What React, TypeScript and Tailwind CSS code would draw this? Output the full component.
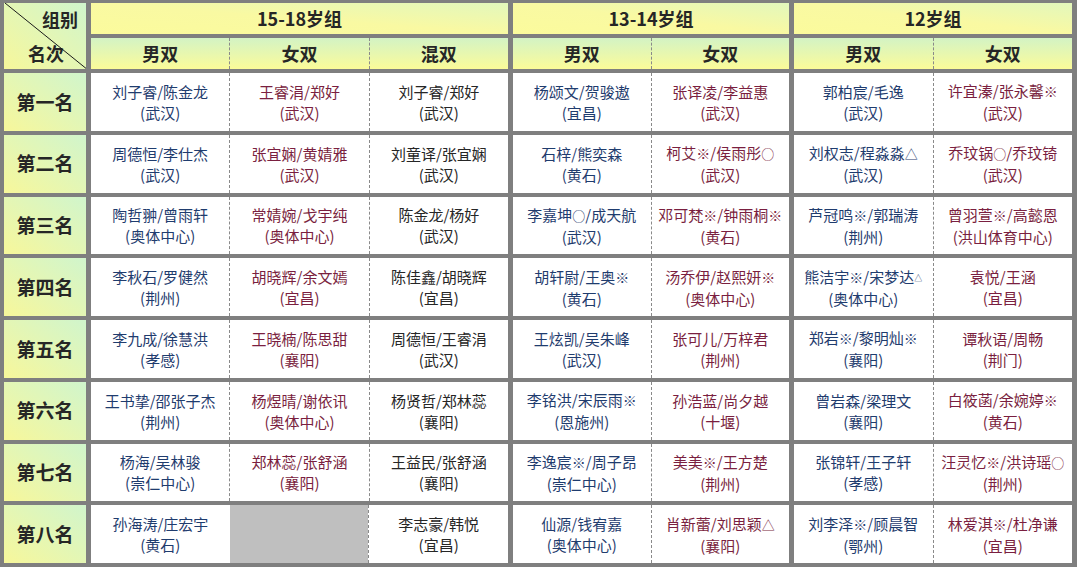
import React from "react";

type Cell = { name: string; place: string; sup?: string } | null;

// column colours: 男双 navy, 女双 maroon, 混双 near black
const COLORS = [
  "text-[#1f3c6e]",
  "text-[#7a1f40]",
  "text-[#262626]",
  "text-[#1f3c6e]",
  "text-[#7a1f40]",
  "text-[#1f3c6e]",
  "text-[#7a1f40]",
];

const GROUPS = [
  { label: "15-18岁组", subs: ["男双", "女双", "混双"] },
  { label: "13-14岁组", subs: ["男双", "女双"] },
  { label: "12岁组", subs: ["男双", "女双"] },
];

const RANKS = ["第一名", "第二名", "第三名", "第四名", "第五名", "第六名", "第七名", "第八名"];

const c = (name: string, place: string, sup?: string): Cell => ({ name, place, sup });

const ROWS: Cell[][] = [
  [
    c("刘子睿/陈金龙", "武汉"),
    c("王睿涓/郑好", "武汉"),
    c("刘子睿/郑好", "武汉"),
    c("杨颂文/贺骏遨", "宜昌"),
    c("张译凌/李益惠", "武汉"),
    c("郭柏宸/毛逸", "武汉"),
    c("许宜溱/张永馨※", "武汉"),
  ],
  [
    c("周德恒/李仕杰", "武汉"),
    c("张宜娴/黄婧雅", "武汉"),
    c("刘童译/张宜娴", "武汉"),
    c("石梓/熊奕森", "黄石"),
    c("柯艾※/侯雨彤○", "武汉"),
    c("刘权志/程淼淼△", "武汉"),
    c("乔玟锅○/乔玟锜", "武汉"),
  ],
  [
    c("陶哲翀/曾雨轩", "奥体中心"),
    c("常婧婉/戈宇纯", "奥体中心"),
    c("陈金龙/杨好", "武汉"),
    c("李嘉坤○/成天航", "武汉"),
    c("邓可梵※/钟雨桐※", "黄石"),
    c("芦冠鸣※/郭瑞涛", "荆州"),
    c("曾羽萱※/高懿恩", "洪山体育中心"),
  ],
  [
    c("李秋石/罗健然", "荆州"),
    c("胡晓辉/余文嫣", "宜昌"),
    c("陈佳鑫/胡晓辉", "宜昌"),
    c("胡轩尉/王奥※", "黄石"),
    c("汤乔伊/赵熙妍※", "奥体中心"),
    c("熊洁宇※/宋梦达", "奥体中心", "△"),
    c("袁悦/王涵", "宜昌"),
  ],
  [
    c("李九成/徐慧洪", "孝感"),
    c("王晓楠/陈思甜", "襄阳"),
    c("周德恒/王睿涓", "武汉"),
    c("王炫凯/吴朱峰", "武汉"),
    c("张可儿/万梓君", "荆州"),
    c("郑岩※/黎明灿※", "襄阳"),
    c("谭秋语/周畅", "荆门"),
  ],
  [
    c("王书挚/邵张子杰", "荆州"),
    c("杨煜晴/谢依讯", "奥体中心"),
    c("杨贤哲/郑林蕊", "襄阳"),
    c("李铭洪/宋辰雨※", "恩施州"),
    c("孙浩蓝/尚夕越", "十堰"),
    c("曾岩森/梁理文", "襄阳"),
    c("白筱菡/余婉婷※", "黄石"),
  ],
  [
    c("杨海/吴林骏", "崇仁中心"),
    c("郑林蕊/张舒涵", "襄阳"),
    c("王益民/张舒涵", "襄阳"),
    c("李逸宸※/周子昂", "崇仁中心"),
    c("美美※/王方楚", "荆州"),
    c("张锦轩/王子轩", "孝感"),
    c("汪灵忆※/洪诗瑶○", "荆州"),
  ],
  [
    c("孙海涛/庄宏宇", "黄石"),
    null,
    c("李志豪/韩悦", "宜昌"),
    c("仙源/钱宥嘉", "奥体中心"),
    c("肖新蕾/刘思颖△", "襄阳"),
    c("刘李泽※/顾晨智", "鄂州"),
    c("林爱淇※/杜净谦", "宜昌"),
  ],
];

const DASH = "border-l border-dashed border-[#8a8a8a]";

// the marks ※ ○ △ sit a bit smaller than the names in the sheet
function Name({ text }: { text: string }) {
  return (
    <>
      {text.split(/([※○△])/).map((part, i) =>
        part === "※" ? (
          <span key={i} className="text-[14px]">
            {part}
          </span>
        ) : part === "○" || part === "△" ? (
          <span key={i} className="text-[13px]">
            {part}
          </span>
        ) : (
          part
        )
      )}
    </>
  );
}

function PairCell({ cell, col, first }: { cell: Cell; col: number; first: boolean }) {
  if (!cell) {
    return <div className="flex-1 bg-[#bfbfbf]" />;
  }
  return (
    <div
      className={`flex-1 flex flex-col items-center justify-center text-[15px] leading-[21px] whitespace-nowrap ${COLORS[col]} ${
        first ? "" : DASH
      }`}
    >
      <span>
        <Name text={cell.name} />
        {cell.sup && <span className="text-[8px] align-top relative top-[1px]">{cell.sup}</span>}
      </span>
      <span>({cell.place})</span>
    </div>
  );
}

export default function App() {
  const offsets = [0, 3, 5];

  return (
    <div className="w-[1080px] h-[567px] bg-white font-['Noto_Sans_CJK_SC',sans-serif]">
      <div className="w-[1077px] h-[567px] bg-[#7f7f7f] pt-[3px] pl-[4px] pr-[5px] pb-[4px] grid grid-cols-[82px_417px_276px_278px] grid-rows-[31px_31px_repeat(8,57.75px)] gap-x-[5px] gap-y-[4px]">
        {/* corner cell */}
        <div className="row-span-2 relative flex flex-col justify-between bg-linear-to-tr from-[#f7f79a] to-[#d0f5cc] text-[18px] font-bold text-[#262626] leading-none">
          <svg className="absolute inset-0" width="82" height="66" viewBox="0 0 82 66">
            <line x1="1" y1="0" x2="84" y2="67" stroke="#1a1a1a" strokeWidth="1" />
          </svg>
          <span className="self-end pr-[8px] pt-[7px]">组别</span>
          <span className="self-start pl-[24px] pb-[7px]">名次</span>
        </div>

        {/* group headers */}
        {GROUPS.map((g) => (
          <div
            key={g.label}
            className="flex items-center justify-center bg-linear-to-tr from-[#fbfb9c] via-[#f9f9a2] to-[#e2f7bc] text-[18px] font-bold text-[#262626]"
          >
            {g.label}
          </div>
        ))}

        {/* event headers */}
        {GROUPS.map((g) => (
          <div key={g.label + "-subs"} className="flex">
            {g.subs.map((s, i) => (
              <div
                key={s}
                className={`flex-1 flex items-center justify-center bg-linear-to-b from-[#d3f3c4] to-[#fbfb98] text-[18px] font-bold text-[#262626] ${
                  i === 0 ? "" : DASH
                }`}
              >
                {s}
              </div>
            ))}
          </div>
        ))}

        {/* results */}
        {ROWS.map((row, r) => (
          <React.Fragment key={RANKS[r]}>
            <div className="flex items-center justify-center bg-linear-to-tr from-[#f7f79a] to-[#d0f5cc] text-[19px] font-bold text-[#262626]">
              {RANKS[r]}
            </div>
            {GROUPS.map((g, gi) => (
              <div key={g.label} className="flex bg-white">
                {g.subs.map((s, i) => {
                  const col = offsets[gi] + i;
                  return <PairCell key={s} cell={row[col]} col={col} first={i === 0} />;
                })}
              </div>
            ))}
          </React.Fragment>
        ))}
      </div>
    </div>
  );
}
